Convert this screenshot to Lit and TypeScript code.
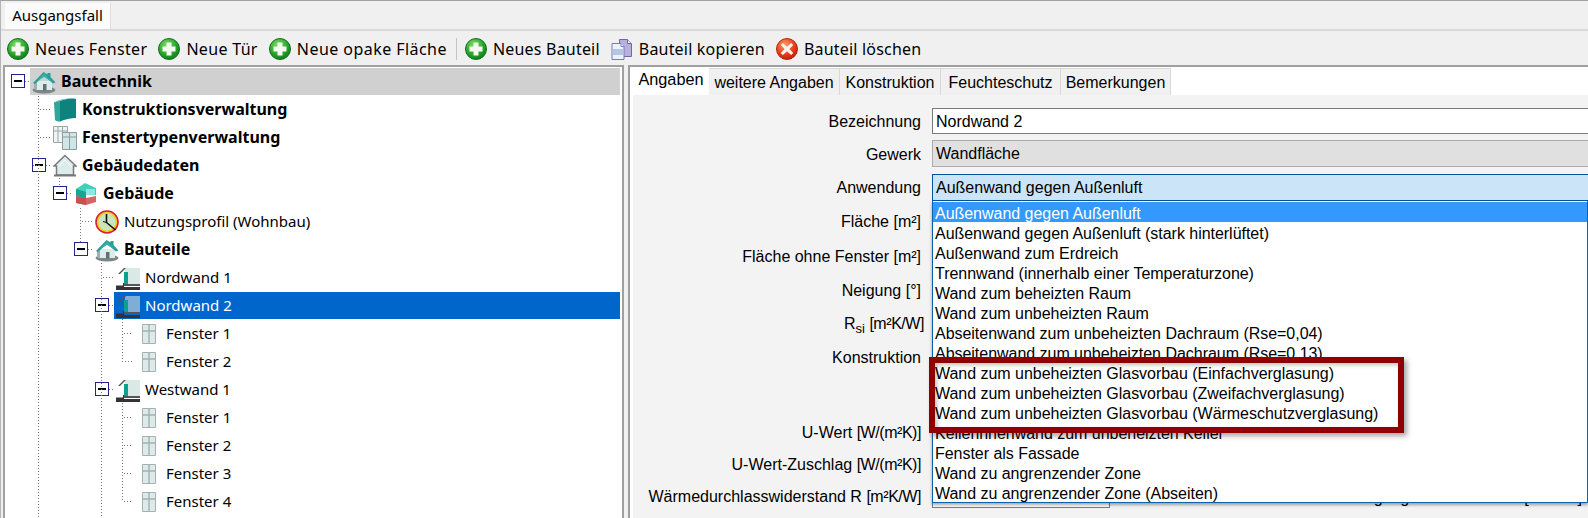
import { LitElement, html, css, svg } from "lit";
import { customElement } from "lit/decorators.js";

const plus = html`<svg class="ti" viewBox="0 0 22 22"><defs><radialGradient id="g" cx="40%" cy="30%" r="75%"><stop offset="0" stop-color="#7fdc6a"/><stop offset=".6" stop-color="#2aa52a"/><stop offset="1" stop-color="#0b7a1a"/></radialGradient></defs><circle cx="11" cy="11" r="10.5" fill="url(#g)" stroke="#0f7020"/><path d="M8.5 4.5h5v4h4v5h-4v4h-5v-4h-4v-5h4z" fill="#f4f8f0"/></svg>`;
const cross = html`<svg class="ti" viewBox="0 0 22 22"><defs><radialGradient id="r" cx="40%" cy="30%" r="75%"><stop offset="0" stop-color="#ff9a60"/><stop offset=".6" stop-color="#e8401c"/><stop offset="1" stop-color="#b81a0a"/></radialGradient></defs><circle cx="11" cy="11" r="10.5" fill="url(#r)" stroke="#b02a10"/><path d="M6.8 5l4.2 3.8L15.2 5l2 2-3.800 4 3.800 4-2 2-4.200-3.800L6.800 17l-2-2 3.800-4-3.800-4z" fill="#fbf3ee"/></svg>`;
const copy = html`<svg class="ti" viewBox="0 0 22 22"><path d="M8.5 1.5h8l4 4v13h-12z" fill="#b9b0dc" stroke="#6f6a9e"/><path d="M16.5 1.5v4h4" fill="#e8e6f4" stroke="#6f6a9e"/><path d="M1 5.500h9l3 3v13H1z" fill="#eef2fa" stroke="#7280ad"/><path d="M2 11h10v6H2z" fill="#b4c6e6"/><path d="M10 5.500v3h3" fill="#fff" stroke="#7280ad"/></svg>`;

const house = html`<svg class="ic" viewBox="0 0 24 24"><ellipse cx="12" cy="20" rx="11.500" ry="3.500" fill="#7d8585"/><path d="M5 11h15v9H5z" fill="#dcebeb"/><path d="M5 11v9.500l-3-1.500v-6z" fill="#a3b0b0"/><path d="M11 14h3.500v6.500H11z" fill="#5e7272"/><path d="M1 13L11.500 2l4 2.500V3h3v4l5 5.500-2.500 1L12 6l-9 8z" fill="#2a9f98"/><path d="M5 11l7-7.500 7 7.500-7-4z" fill="#34b3ab"/></svg>`;
const block = html`<svg class="ic" viewBox="0 0 24 24"><path d="M1 4.500c2-1 4-1.500 6-1.500v20.500c-2 0-4-.5-5-1.500z" fill="#2ea59d"/><path d="M7 3c5-2 11-3 16-2v19c-5 0-11 1.500-16 3.500z" fill="#0e827c"/><path d="M1 4.500C7 1 16-.5 23 1 16 .5 11 1.500 7 3z" fill="#4ab8b1"/></svg>`;
const winTypes = html`<svg class="ic" viewBox="0 0 24 24"><g fill="#eef4f4" stroke="#9aa6a6"><path d="M0.500 .5h14v16h-14z"/><path d="M5 .5v16M9.500 .5v16M.5 5h14" fill="none"/></g><g stroke="#8f9c9c"><path d="M9.500 6.500h14v17h-14z" fill="#cfe6e6"/><path d="M16.500 6.500v17M9.500 11h14" fill="none"/></g></svg>`;
const homeOutline = html`<svg class="ic" viewBox="0 0 24 24"><path d="M12 1.500L23 12h-2.500v9h-17v-9H1z" fill="#dcebeb" stroke="#7b7b7b" stroke-width="1.500"/><path d="M1 21.500h22" stroke="#777" stroke-width="2"/><path d="M5 13l7-7 7 7" fill="none" stroke="#fff"/></svg>`;
const cube = html`<svg class="ic" viewBox="0 0 24 24"><path d="M2 7l9-6 11 5v7H2z" fill="#3fd0bd"/><path d="M2 7l10 3v6H2z" fill="#17a595"/><path d="M12 7h9v6h-9z" fill="#8be8dc"/><path d="M2 14l10 2 10-2v6l-10 3-10-2z" fill="#d66565"/><path d="M2 15l10 1v7l-10-2z" fill="#c95050"/></svg>`;
const clock = html`<svg class="ic" viewBox="0 0 24 24"><circle cx="12" cy="12" r="11" fill="#f4d21c" stroke="#d5203c" stroke-width="1.600"/><circle cx="12" cy="12" r="8.500" fill="#c8e4c0"/><path d="M11.500 4v8.500l9 7.500" fill="none" stroke="#111" stroke-width="1.600"/><path d="M8 11.500l3.500 1" stroke="#111"/></svg>`;
const wall = (sel: boolean) => html`<svg class="ic" viewBox="0 0 24 24"><path d="M9 2h15v16H9z" fill="${sel ? "#7eaed6" : "#dbe8e8"}"/><path d="M8 6h4v12H8z" fill="#0e9f8e"/><path d="M2 8l6-6h2L4 8z" fill="#555"/><path d="M8 18h16v2H8z" fill="#555"/><path d="M0 19.500h7V17h1v4h16v3H0z" fill="#333"/></svg>`;
const win = html`<svg class="ic" viewBox="0 0 24 24"><g transform="translate(5 2)"><path d="M.5.5h13v19H.5z" fill="#dcebea" stroke="#a5b0b0"/><path d="M7 .5v19M.5 7h13" stroke="#a5b0b0" fill="none" stroke-width="1.400"/></g></svg>`;

interface Row { d: number; icon: unknown; text: string; exp?: boolean; bold?: boolean; sel?: "grey" | "blue"; }
const rows: Row[] = [
  { d: 0, icon: house, text: "Bautechnik", exp: true, bold: true, sel: "grey" },
  { d: 1, icon: block, text: "Konstruktionsverwaltung", bold: true },
  { d: 1, icon: winTypes, text: "Fenstertypenverwaltung", bold: true },
  { d: 1, icon: homeOutline, text: "Gebäudedaten", exp: true, bold: true },
  { d: 2, icon: cube, text: "Gebäude", exp: true, bold: true },
  { d: 3, icon: clock, text: "Nutzungsprofil (Wohnbau)" },
  { d: 3, icon: house, text: "Bauteile", exp: true, bold: true },
  { d: 4, icon: wall(false), text: "Nordwand 1" },
  { d: 4, icon: wall(true), text: "Nordwand 2", exp: true, sel: "blue" },
  { d: 5, icon: win, text: "Fenster 1" },
  { d: 5, icon: win, text: "Fenster 2" },
  { d: 4, icon: wall(false), text: "Westwand 1", exp: true },
  { d: 5, icon: win, text: "Fenster 1" },
  { d: 5, icon: win, text: "Fenster 2" },
  { d: 5, icon: win, text: "Fenster 3" },
  { d: 5, icon: win, text: "Fenster 4" },
];

const options = [
  "Außenwand gegen Außenluft",
  "Außenwand gegen Außenluft (stark hinterlüftet)",
  "Außenwand zum Erdreich",
  "Trennwand (innerhalb einer Temperaturzone)",
  "Wand zum beheizten Raum",
  "Wand zum unbeheizten Raum",
  "Abseitenwand zum unbeheizten Dachraum (Rse=0,04)",
  "Abseitenwand zum unbeheizten Dachraum (Rse=0,13)",
  "Wand zum unbeheizten Glasvorbau (Einfachverglasung)",
  "Wand zum unbeheizten Glasvorbau (Zweifachverglasung)",
  "Wand zum unbeheizten Glasvorbau (Wärmeschutzverglasung)",
  "Kellerinnenwand zum unbeheizten Keller",
  "Fenster als Fassade",
  "Wand zu angrenzender Zone",
  "Wand zu angrenzender Zone (Abseiten)",
];

const linePath = "M38 96V518M40 109H50M40 137H50M40 165H32M25 81H30M59 178V187M46 165H51M67 193H72M80 208V243M82 221H92M88 249H93M101 263V518M103 277H113M109 305H113M109 389H113M122 319V361M124 333H133M122 361H133M122 403V501M124 417H133M124 445H133M124 473H133M124 501H133";

@customElement("app-root")
export class AppRoot extends LitElement {
  static styles = css`
    :host { display: block; width: 1588px; height: 518px; overflow: hidden; background: #f0f0f0; position: relative; box-sizing: border-box; border-top: 1px solid #a0a0a0; border-left: 1px solid #b4b4b4; color: #000; }
    .tabbar { height: 29px; box-sizing: border-box; padding: 2px 0 0 4px; border-bottom: 1px solid #dadada; }
    .tab0 { display: inline-block; width: 106px; height: 26px; background: #fbfbfb; font: 15px/24px "Noto Sans", sans-serif; text-align: center; border-right: 1px solid #ddd; box-sizing: border-box; }
    .toolbar { height: 35px; display: flex; align-items: center; padding: 2px 0 0 6px; border-top: 1px solid #dadada; box-sizing: border-box; font: 16px "Noto Sans", sans-serif; letter-spacing: .32px; }
    .tool { display: flex; align-items: center; gap: 6px; margin-right: 11px; white-space: nowrap; }
    .tool.wide { letter-spacing: .45px; }
    .tool.tight { letter-spacing: .2px; }
    .ti { width: 22px; height: 22px; flex: none; }
    .sep { width: 1px; height: 22px; background: #c4c4c4; margin: 0 8px 0 -2px; }
    .panes { display: flex; height: 453px; padding-left: 2px; }
    .left { width: 621px; box-sizing: border-box; border: 2px solid #a0a0a0; border-bottom: 0; background: #fff; position: relative; flex: none; }
    .lines { position: absolute; left: 0; top: 0; width: 617px; height: 451px; pointer-events: none; }
    .row { height: 28px; display: flex; padding-left: 6px; position: relative; font: 15px "Noto Sans", sans-serif; }
    .row .txt { margin-top: -2px; }
    .row.b { font: bold 16px "Noto Sans", sans-serif; }
    .row.b .txt { margin-top: -1px; }
    .slot { width: 19px; flex: none; display: flex; align-items: center; }
    .exp { width: 14px; height: 14px; box-sizing: border-box; border: 1px solid #24248e; background: #fff; display: flex; align-items: center; justify-content: center; }
    .exp::after { content: ""; width: 8px; height: 2px; background: #000; }
    .body { flex: 1; margin: 1px 2px 0 0; display: flex; align-items: center; padding-left: 2px; white-space: nowrap; }
    .body.grey { background: #d0d0d0; }
    .body.blue { background: #0066cc; color: #fff; }
    .ic { width: 24px; height: 24px; flex: none; margin-right: 5px; }
    .right { margin-left: 4px; flex: 1; min-width: 0; box-sizing: border-box; border: 2px solid #a0a0a0; border-bottom: 0; border-right: 0; background: #fff; padding-left: 3px; }
    .tabs { display: flex; height: 28px; font: 16px "Liberation Sans", sans-serif; }
    .t { box-sizing: border-box; background: #f0f0f0; border: 1px solid #d9d9d9; border-left: 0; border-bottom: 0; margin-top: 1px; padding-top: 1px; display: flex; align-items: center; justify-content: center; }
    .t.on { background: #fff; border: 0; margin-top: 0; padding: 0 0 4px; font-size: 16.3px; }
    .content { background: #f3f3f3; height: 423px; position: relative; overflow: hidden; }
    .form { display: grid; grid-template-columns: 288px 1fr; column-gap: 11px; padding-top: 10px; grid-template-rows: 32px 33px 34px 34px 36px 32px 35px 31px 44px 32px 32px 32px; font: 16px "Liberation Sans", sans-serif; }
    .lbl { grid-column: 1; text-align: right; align-self: center; white-space: nowrap; padding-top: 2px; }
    .lbl sub { font-size: 13px; line-height: 0; }
    .lbl.over { margin-right: -3px; padding-top: 0; }
    .unit { letter-spacing: -.45px; }
    .field { grid-column: 2; align-self: center; box-sizing: border-box; height: 26px; border: 1px solid #7a7a7a; background: #fff; padding-left: 3px; line-height: 26px; }
    .field.ro { background: #e0e0e0; border-color: #adadad; height: 27px; }
    .field.act { background: #cce4f7; border-color: #005499; height: 27px; }
    .last { grid-column: 2; align-self: end; display: flex; gap: 8px; margin-bottom: 4px; height: 24px; align-items: center; white-space: nowrap; }
    .box { height: 24px; box-sizing: border-box; border: 1px solid #7a7a7a; background: #fff; flex: none; }
    .hint { width: 464px; text-align: right; padding-top: 4px; }
    .list { position: absolute; left: 299px; right: 0; top: 106px; height: 302px; box-sizing: border-box; background: #fff; border: 1px solid #0a64ad; border-top: 0; padding-top: 1px; box-shadow: 0 2px 3px rgba(0,0,0,.35); font: 16px/24px "Liberation Sans", sans-serif; letter-spacing: -.03px; }
    .opt { height: 20px; padding-left: 2px; white-space: nowrap; }
    .opt.hl { background: #3399ff; color: #fff; }
    .mark { position: absolute; left: 928px; top: 356px; width: 475px; height: 76px; box-sizing: border-box; border: 6px solid #8f0000; box-shadow: 3px 3px 5px rgba(0,0,0,.35), inset 2px 2px 4px rgba(0,0,0,.25); pointer-events: none; }
  `;

  render() {
    const tool = (i: unknown, t: string, c = "") => html`<div class="tool ${c}">${i}<span>${t}</span></div>`;
    return html`
      <div class="tabbar"><span class="tab0">Ausgangsfall</span></div>
      <div class="toolbar">
        ${tool(plus, "Neues Fenster")}${tool(plus, "Neue Tür")}${tool(plus, "Neue opake Fläche", "wide")}
        <div class="sep"></div>
        ${tool(plus, "Neues Bauteil", "tight")}${tool(copy, "Bauteil kopieren", "tight")}${tool(cross, "Bauteil löschen", "tight")}
      </div>
      <div class="panes">
        <div class="left">
          ${rows.map(r => html`<div class="row ${r.bold ? "b" : ""}" style="padding-left:${6 + 21 * r.d}px">
            <div class="slot">${r.exp ? html`<div class="exp"></div>` : ""}</div>
            <div class="body ${r.sel ?? ""}">${r.icon}<span class="txt">${r.text}</span></div>
          </div>`)}
          <svg class="lines" viewBox="5 67 617 451">${svg`<path d="${linePath}" fill="none" stroke="#777" stroke-dasharray="1 2" shape-rendering="crispEdges"/>`}</svg>
        </div>
        <div class="right">
          <div class="tabs">
            <div class="t on" style="width:76px">Angaben</div>
            <div class="t" style="width:131px">weitere Angaben</div>
            <div class="t" style="width:101px">Konstruktion</div>
            <div class="t" style="width:120px">Feuchteschutz</div>
            <div class="t" style="width:110px">Bemerkungen</div>
          </div>
          <div class="content">
            <div class="form">
              <div class="lbl">Bezeichnung</div><div class="field">Nordwand 2</div>
              <div class="lbl">Gewerk</div><div class="field ro">Wandfläche</div>
              <div class="lbl">Anwendung</div><div class="field act">Außenwand gegen Außenluft</div>
              <div class="lbl">Fläche [m²]</div>
              <div class="lbl">Fläche ohne Fenster [m²]</div>
              <div class="lbl">Neigung [°]</div>
              <div class="lbl over">R<sub>si</sub> <span class="unit">[m²K/W]</span></div>
              <div class="lbl">Konstruktion</div>
              <div class="lbl"></div>
              <div class="lbl">U-Wert <span class="unit">[W/(m²K)]</span></div>
              <div class="lbl">U-Wert-Zuschlag <span class="unit">[W/(m²K)]</span></div>
              <div class="lbl">Wärmedurchlasswiderstand R <span class="unit">[m²K/W]</span></div>
              <div class="last"><div class="box" style="width:178px"></div><div class="hint">Wärmedurchgangswiderstand RT [m²K/W]</div><div class="box" style="width:20px"></div></div>
            </div>
            <div class="list">${options.map((o, i) => html`<div class="opt ${i === 0 ? "hl" : ""}">${o}</div>`)}</div>
          </div>
        </div>
      </div>
      <div class="mark"></div>
    `;
  }
}
